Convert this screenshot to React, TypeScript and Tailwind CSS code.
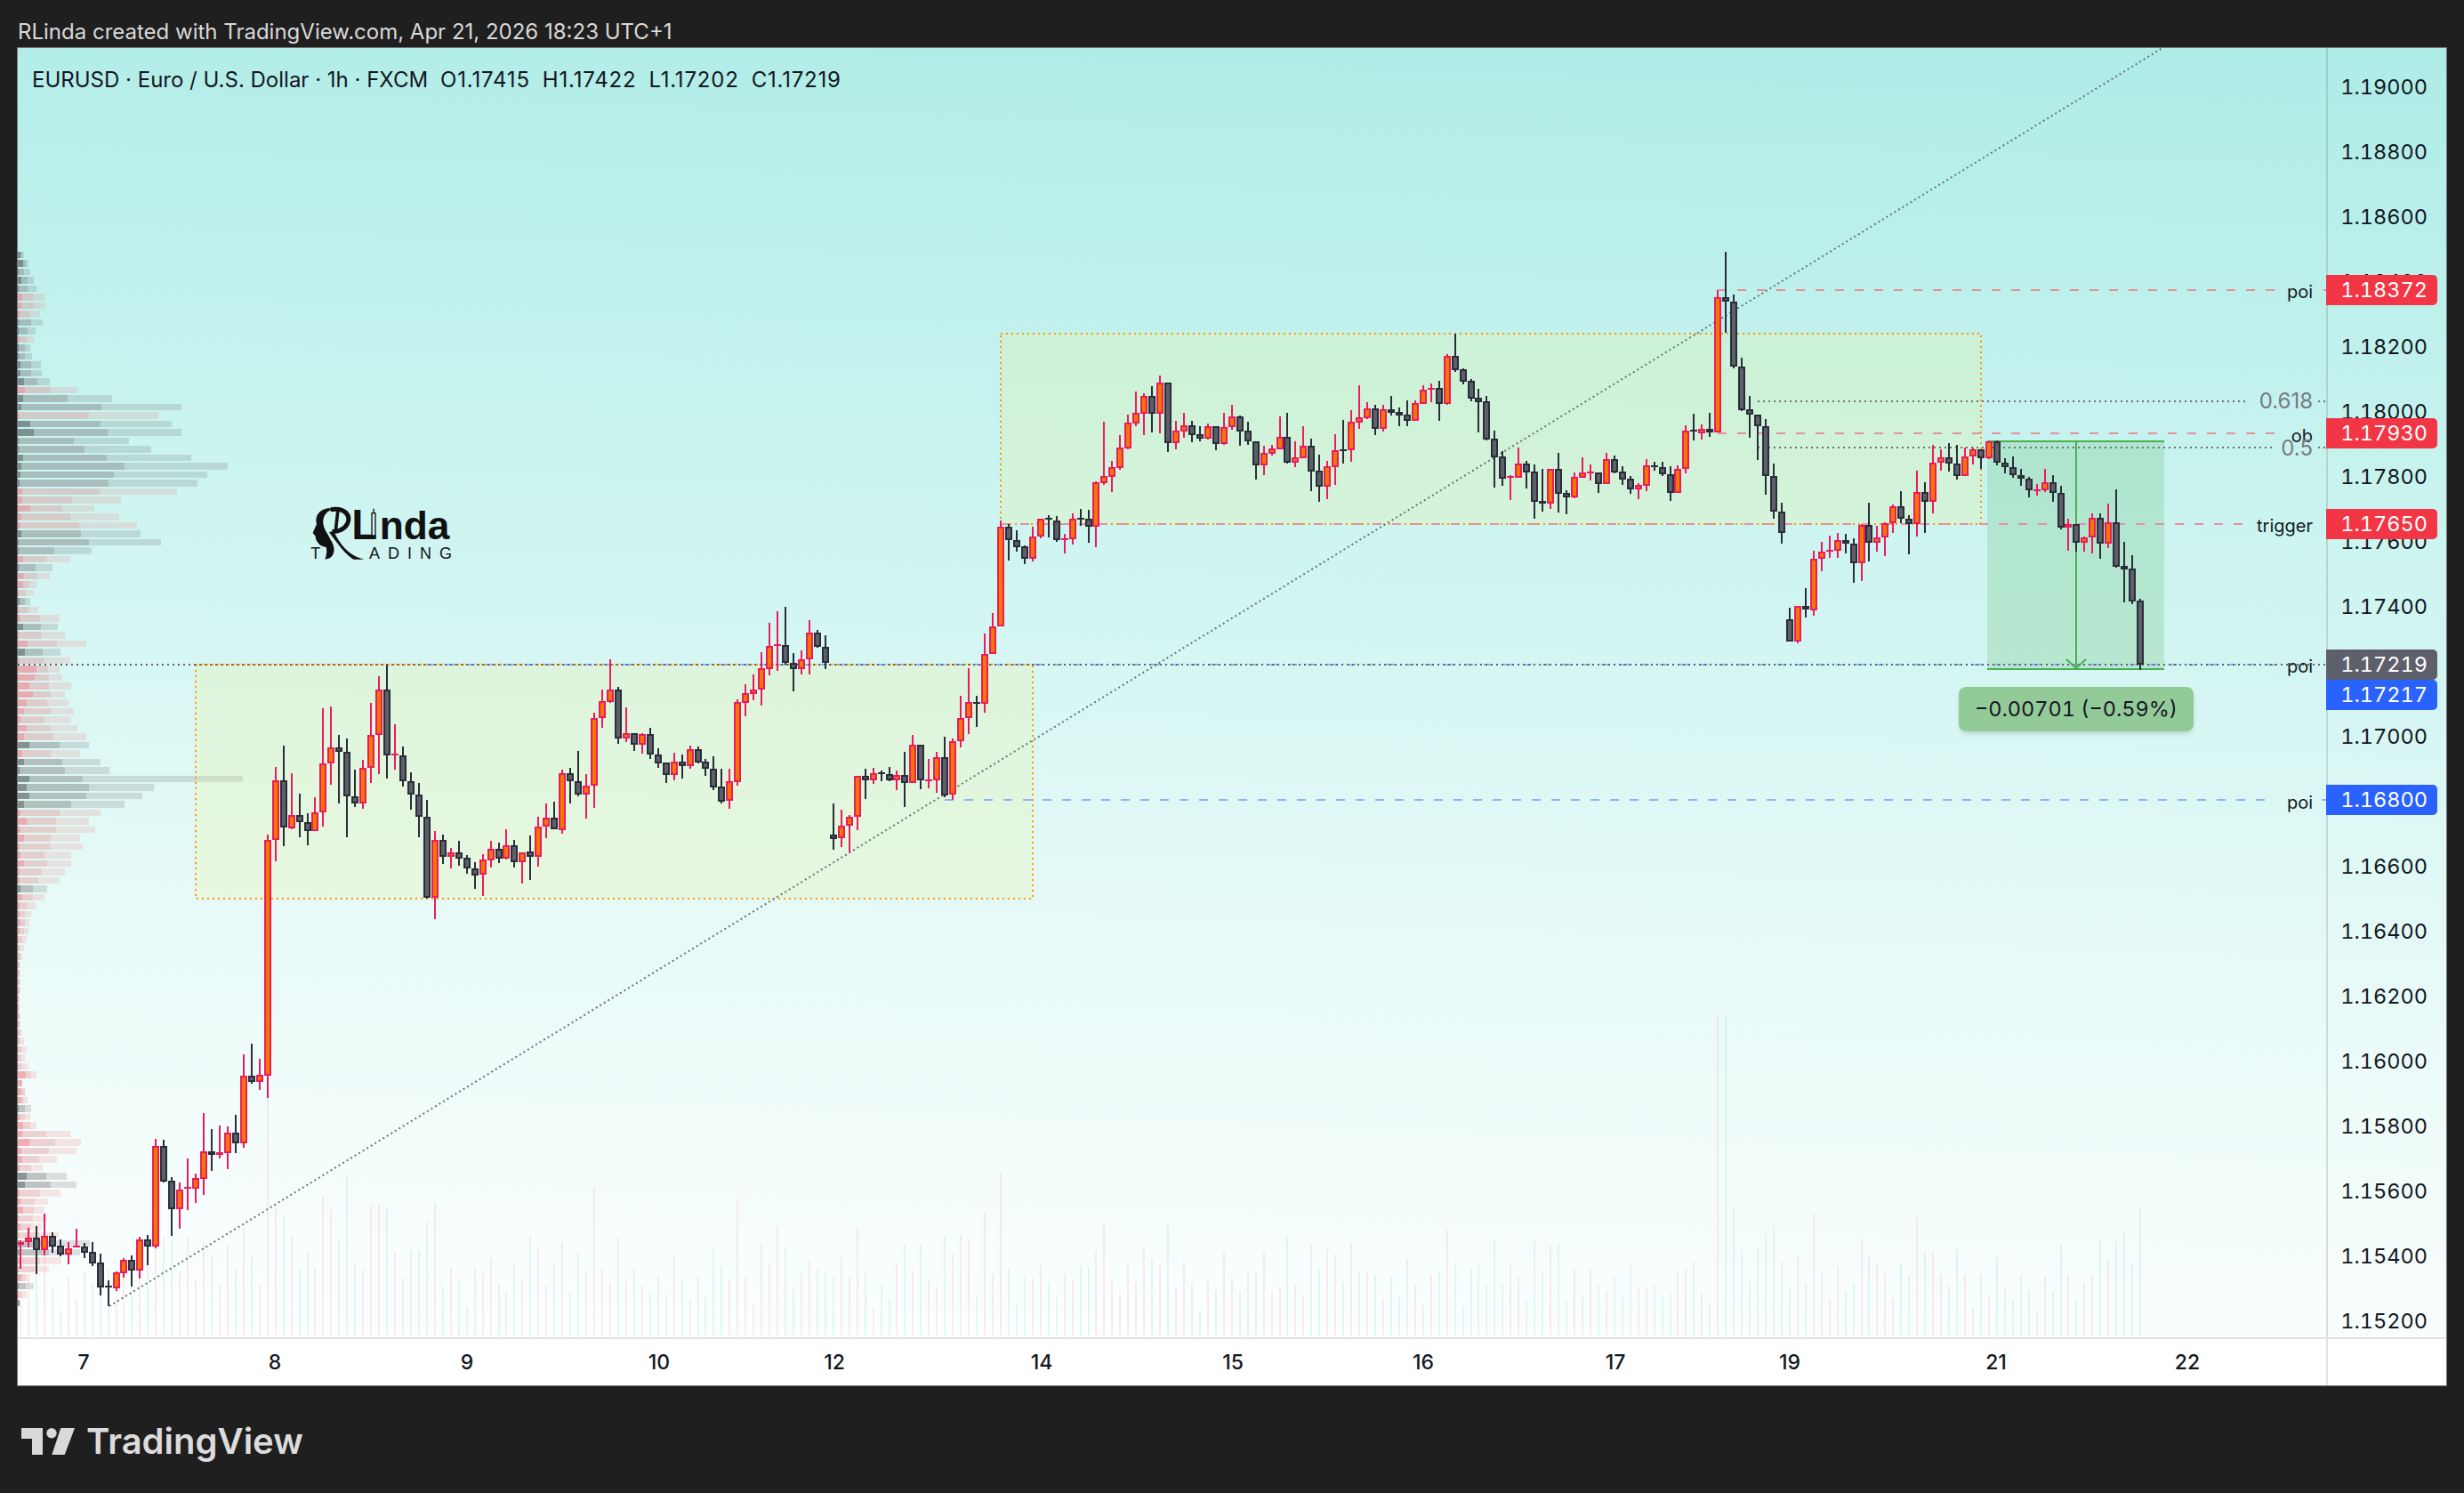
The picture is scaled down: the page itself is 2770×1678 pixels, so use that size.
import React from "react";

// candle rows: [up, wickTop, wickBottom, bodyTop, bodyBottom], y read off crops of the chart
type Row = [number, number, number, number, number];
const groups: { base: number; scale: number; rows: Row[] }[] = [
  { base: 1200, scale: 3, rows: [
    [1,582,678,587,598],[1,540,606,573,588],[0,534,696,573,615],[1,492,633,567,615],[0,555,624,567,603],[0,579,636,600,630],[1,588,663,609,630],
    [1,543,606,600,606],[0,591,642,603,624],[0,588,669,621,660],[0,627,768,657,741],[0,717,804,735,741],[1,687,753,690,744],[1,642,708,648,693],
    [0,633,738,648,684],[1,570,711,579,684],[0,564,666,579,603],[1,240,609,264,603],[0,243,387,264,384],[0,369,567,381,477],[1,387,543,411,477],
    [1,306,480,402,408],[1,357,456,372,408],[1,153,429,282,375],[0,207,348,282,294],[1,195,306,285,294],[1,198,342,219,288],[0,159,288,219,255],
  ] },
  { base: 0, scale: 1, rows: [
    [1,1185,1290,1209,1285],[0,1173,1218,1209,1216],[1,1190,1225,1208,1216],[1,938,1234,944,1209],
  ] },
  { base: 680, scale: 2.904, rows: [
    [1,529,836,573,768],[0,460,786,573,727],[1,550,732,686,728],[0,617,757,686,708],[0,680,783,708,739],[1,628,739,678,739],[1,338,722,518,677],
    [1,332,588,466,518],[0,425,649,466,478],[0,437,757,478,625],[0,538,658,625,647],[1,506,664,532,647],[1,320,580,425,532],[1,233,551,277,425],
    [0,195,565,277,490],[1,390,536,486,490],[0,463,591,490,574],[0,547,667,574,620],[0,582,757,620,692],[0,637,958,692,954],[1,739,1024,768,954],
    [0,750,844,768,823],[1,794,861,808,823],[0,770,850,808,827],[0,817,876,826,861],[0,840,925,860,882],[1,814,949,831,881],[1,770,858,795,832],
    [0,776,841,795,827],[1,733,830,783,827],[0,768,856,783,840],[1,806,908,806,840],[0,753,896,805,821],[1,692,853,724,821],[1,649,760,695,724],
    [0,643,733,695,733],[1,538,745,550,734],[0,532,647,550,574],[0,477,623,574,620],[1,553,696,590,620],[1,352,661,370,590],[1,277,400,315,370],
    [1,178,318,277,316],[0,268,452,277,437],[1,335,446,419,437],[0,419,475,419,455],[1,419,484,422,455],[0,402,501,422,489],[0,468,530,489,516],
    [0,515,580,515,556],[1,483,571,510,556],[0,489,565,510,525],
  ] },
  { base: 560, scale: 3, rows: [
    [1,835,911,847,902],[0,838,895,847,890],[0,880,935,889,913],[0,871,983,913,974],[0,912,1028,973,1022],[1,912,1046,955,1021],[1,679,968,688,956],
    [1,628,735,658,689],[1,595,680,646,659],[1,520,698,574,646],[1,421,596,499,575],[1,382,581,493,497],[0,367,560,496,556],[0,523,650,556,577],
    [1,514,593,544,577],[1,412,593,454,544],[0,445,503,454,502],[0,463,575,502,554],[0,1030,1184,1135,1148],[1,1051,1175,1105,1147],[1,1069,1193,1075,1105],
    [1,937,1118,937,1075],[0,913,1013,937,952],[1,910,962,928,952],[0,919,953,925,928],[0,907,953,931,952],[1,919,983,934,952],[0,856,1040,934,961],
    [1,799,961,832,961],[0,832,980,832,952],[1,880,977,949,952],[1,856,992,874,952],[0,805,1007,874,1001],[1,811,1016,820,1000],[1,667,839,742,820],
    [1,574,794,688,742],[0,667,770,688,694],[1,457,722,526,694],[1,388,526,433,526],[1,76,433,97,433],[0,88,209,97,142],[0,109,179,142,164],
    [0,160,221,163,205],[1,97,212,130,205],[1,70,134,70,130],[0,58,131,67,71],[0,61,146,76,142],[1,121,185,136,140],[1,52,155,70,139],[0,37,92,67,71],
    [0,40,149,70,97],
  ] },
  { base: 360, scale: 3, rows: [
    [1,544,765,547,697],[1,343,555,526,548],[1,475,579,496,527],[1,388,504,430,497],[1,319,435,346,431],[1,241,357,313,347],[1,247,387,256,314],
    [0,223,378,256,314],[1,187,381,211,314],[0,211,444,211,413],[1,340,435,373,413],[1,313,396,355,374],[0,340,411,355,386],[0,358,408,385,398],
    [1,349,402,358,398],[0,358,438,358,418],[1,313,419,361,418],[1,286,369,325,361],[0,322,423,325,374],[0,343,420,373,409],[0,409,537,409,488],
    [1,424,522,448,488],[1,421,456,433,449],[1,325,434,394,434],[0,313,483,394,479],[1,409,495,463,479],[1,358,464,424,464],[0,400,576,424,509],
    [0,454,612,508,560],[1,475,603,493,560],[1,385,555,439,494],[0,337,483,436,440],[1,304,477,343,439],
  ] },
  { base: 360, scale: 3, rows: [
    [1,220,366,328,344],[1,277,333,298,329],[0,286,387,298,365],[1,286,375,301,365],[0,256,321,301,311],[0,295,357,310,320],[0,271,357,319,338],
    [1,271,338,280,338],[1,220,281,235,281],[1,214,276,229,235],[0,205,339,229,281],[1,115,285,121,281],[0,46,174,121,167],[0,163,216,166,206],
    [0,199,273,205,263],[0,232,378,262,275],[0,256,405,274,401],[0,373,564,400,461],[0,442,558,460,533],[1,523,606,526,530],[1,430,531,484,530],
    [0,475,567,484,512],[0,487,669,511,611],[0,502,645,610,617],[1,502,636,502,617],[0,448,648,502,584],[0,574,654,583,596],[1,514,600,529,596],
    [1,463,531,514,530],[1,487,540,511,515],[0,514,582,514,551],[1,448,552,469,551],[0,457,516,469,513],[0,493,555,511,536],[0,526,585,535,570],
    [1,550,603,556,569],[1,469,576,490,557],[0,478,507,490,496],[0,478,525,496,520],[0,493,609,520,581],[1,490,581,502,581],[1,355,516,373,502],
    [0,316,405,370,374],[1,352,402,367,380],
  ] },
  { base: 300, scale: 3, rows: [
    [0,493,573,547,559],[1,79,559,103,559],[0,-51,222,103,118],[0,94,342,118,337],[0,307,486,337,482],[0,436,576,481,499],[0,499,651,499,538],
    [0,514,768,538,706],[0,664,849,706,826],[0,796,933,826,898],[0,1150,1262,1189,1262],[1,1144,1268,1144,1262],[0,1084,1182,1144,1156],[1,958,1176,985,1157],
    [1,928,1026,961,985],[1,907,981,955,958],[1,898,981,922,958],[0,901,966,922,934],[0,916,1065,934,1000],[1,867,1059,871,1000],[0,796,993,871,931],
    [1,874,960,913,931],[1,862,975,865,913],[1,802,897,808,865],[0,757,864,808,850],[0,838,969,850,868],[1,688,909,760,868],[0,727,897,760,793],
    [1,601,831,661,793],[1,616,687,643,661],[0,595,690,643,664],[0,601,717,664,706],[1,610,706,640,706],[1,610,666,616,640],[0,616,681,616,646],
    [1,589,648,589,646],[0,586,669,589,661],[0,646,696,661,676],[0,640,712,676,703],[0,682,738,703,715],[0,709,777,715,754],[1,733,771,751,754],
    [1,682,759,727,754],[0,703,792,727,763],[0,739,885,763,880],[1,850,957,868,880],[0,868,960,868,931],[1,910,960,913,931],[1,832,966,847,913],
    [0,832,984,847,934],[1,799,948,862,934],[0,751,1014,862,1010],[0,928,1131,1009,1019],[0,973,1137,1018,1127],
  ] },
  { base: 0, scale: 1, rows: [[0,673,753,675,747]] },
];

const candles = groups.flatMap((g) =>
  g.rows.map(([up, wt, wb, bt, bb]) => ({
    up: up === 1,
    wt: Math.round(g.base + wt / g.scale),
    wb: Math.round(g.base + wb / g.scale),
    bt: Math.round(g.base + bt / g.scale),
    bb: Math.round(g.base + bb / g.scale),
  }))
).map((c, i) => ({ ...c, x: Math.round(23 + 8.959 * i) }));

// volume profile rows: [type, dark end, mid end, light end], x * 3 like the crops
const profile: [string, number, number, number][] = [
  ["t",70,76,81],["t",78,87,96],["t",62,81,102],["t",72,93,114],["t",62,93,123],["p",75,111,150],["p",72,114,153],["p",66,99,135],["t",62,105,144],["t",62,93,120],
  ["p",66,90,114],["t",62,84,102],["t",62,84,108],["t",69,105,138],["t",69,105,141],["t",81,126,168],["p",84,171,261],["t",78,228,378],["t",72,342,612],["p",62,300,534],
  ["t",102,339,579],["t",114,363,612],["t",62,249,435],["t",62,285,510],["t",78,360,645],["t",72,420,768],["t",69,384,699],["t",66,366,666],["p",75,336,597],["p",75,243,408],
  ["p",102,210,318],["p",72,237,402],["p",69,267,462],["t",72,273,474],["t",62,300,543],["t",62,183,309],["p",78,156,237],["t",62,120,177],["p",81,126,168],["p",78,99,123],
  ["p",62,87,114],["t",66,84,102],["p",62,96,129],["p",69,135,201],["t",78,138,195],["p",62,141,219],["p",93,192,291],["t",84,144,204],["p",62,150,237],["p",123,162,201],
  ["p",117,165,210],["p",100,165,240],["p",110,170,220],["p",90,160,230],["p",80,170,250],["p",70,150,240],["p",90,170,260],["p",80,180,290],["t",100,200,300],["p",75,170,270],
  ["t",80,210,340],["t",66,220,370],["t",100,280,820],["t",90,300,520],["t",100,290,480],["t",80,240,420],["p",70,200,340],["p",90,190,300],["p",70,190,320],["p",80,170,270],
  ["p",66,170,280],["p",70,150,240],["p",80,160,240],["p",66,140,220],["p",66,130,200],["t",70,110,160],["p",75,110,150],["p",66,90,120],["p",66,85,105],["p",70,85,100],
  ["p",66,80,95],["p",62,75,90],["p",62,70,80],["p",62,68,74],["p",62,66,70],["p",62,65,68],["p",62,65,68],["p",62,65,68],["p",62,64,66],["p",62,64,66],
  ["p",62,65,68],["p",62,66,70],["p",62,68,74],["p",62,70,80],["p",62,75,90],["p",62,72,84],["p",62,75,95],
  ["p",87,105,123],["p",75,75,75],["p",72,84,84],["p",72,81,93],["t",62,84,105],["p",66,84,102],["p",78,102,123],["p",75,156,237],["p",99,186,273],["p",72,165,258],
  ["p",75,132,192],["p",66,105,144],["t",90,156,225],["t",84,171,258],["p",66,135,204],["p",69,117,162],["p",78,114,150],["p",62,111,159],["p",69,105,141],["p",62,132,198],
  ["t",62,183,303],["t",62,165,270],["p",62,135,207],["p",62,117,165],["p",72,87,102],["t",62,87,114],["p",62,75,90],["t",66,66,66],
];

const shades: Record<string, string[]> = {
  t: ["rgba(70,80,80,.6)", "rgba(120,120,120,.44)", "rgba(120,120,120,.22)"],
  p: ["rgba(240,130,140,.65)", "rgba(225,120,125,.33)", "rgba(240,120,120,.18)"],
};

const priceTicks = ["1.19000","1.18800","1.18600","1.18400","1.18200","1.18000","1.17800","1.17600","1.17400","1.17200","1.17000","1.16800","1.16600","1.16400","1.16200","1.16000","1.15800","1.15600","1.15400","1.15200"];

const days = [
  { label: "7", cls: "ml-[74px]" }, { label: "8", cls: "ml-[215px]" }, { label: "9", cls: "ml-[216px]" }, { label: "10", cls: "ml-[216px]" },
  { label: "12", cls: "ml-[197px]" }, { label: "14", cls: "ml-[233px]" }, { label: "15", cls: "ml-[215px]" }, { label: "16", cls: "ml-[214px]" },
  { label: "17", cls: "ml-[216px]" }, { label: "19", cls: "ml-[196px]" }, { label: "21", cls: "ml-[232px]" }, { label: "22", cls: "ml-[215px]" },
];

const tags = [
  { text: "1.18372", cls: "top-[255px] bg-[#f23645]" },
  { text: "1.17930", cls: "top-[416px] bg-[#f23645]" },
  { text: "1.17650", cls: "top-[518px] bg-[#f23645]" },
  { text: "1.17219", cls: "top-[676px] bg-[#5d606b]" },
  { text: "1.17217", cls: "top-[710px] bg-[#2962ff]" },
  { text: "1.16800", cls: "top-[828px] bg-[#2962ff]" },
];

const lineLabels = [
  { text: "poi", cls: "top-[260px] text-[#131722] text-[20px]" },
  { text: "0.618", cls: "top-[383px] text-[#787b86] text-[24px]" },
  { text: "ob", cls: "top-[422px] text-[#131722] text-[20px]" },
  { text: "0.5", cls: "top-[436px] text-[#787b86] text-[24px]" },
  { text: "trigger", cls: "top-[523px] text-[#131722] text-[20px]" },
  { text: "poi", cls: "top-[681px] text-[#131722] text-[20px]" },
  { text: "poi", cls: "top-[834px] text-[#131722] text-[20px]" },
];

function Chart() {
  const volume = (c: (typeof candles)[number], i: number) => {
    const noise = ((i * 37) % 23) * 2.4 - 26;
    const h = i === 213 || i === 214 ? 360 : Math.max(26, Math.min(280, 30 + (c.wb - c.wt) * 1.1 + noise));
    return <rect key={i} x={c.x - 1} y={1501 - h} width={2} height={h} fill={c.up ? "rgba(242,54,69,.1)" : "rgba(0,150,136,.09)"} />;
  };

  return (
    <svg viewBox="20 54 2595 1449" className="absolute inset-0 w-[2595px] h-[1449px]" shapeRendering="crispEdges">
      {candles.map(volume)}

      {profile.map(([t, a, b, c], i) => {
        const y = 282.7 + 9.5 * i;
        const s = shades[t];
        return (
          <g key={i}>
            <rect x={20} y={y} width={a / 3 - 20} height={7.5} fill={s[0]} />
            <rect x={a / 3} y={y} width={(b - a) / 3} height={7.5} fill={s[1]} />
            <rect x={b / 3} y={y} width={(c - b) / 3} height={7.5} fill={s[2]} />
          </g>
        );
      })}

      {/* yellow boxes */}
      <rect x={220} y={747} width={941} height={263} fill="rgba(240,240,140,.22)" stroke="#ff9800" strokeWidth={2} strokeDasharray="2 4" />
      <rect x={1125} y={375} width={1102} height={214} fill="rgba(240,240,140,.22)" stroke="#ff9800" strokeWidth={2} strokeDasharray="2 4" />

      {/* measure range */}
      <rect x={2234} y={496} width={199} height={256} fill="rgba(76,175,80,.2)" />

      <line x1={123} y1={1468} x2={2431} y2={54} stroke="#66757a" strokeWidth={2} strokeDasharray="2 3.3" shapeRendering="auto" />

      {/* horizontal levels */}
      <g strokeWidth={2}>
        <path d="M1931 326H2558M2612 326H2615" stroke="#e6919d" strokeDasharray="10 12" />
        <path d="M1931 487H2558" stroke="#e6919d" strokeDasharray="10 12" />
        <path d="M1125 589H2522" stroke="#e6919d" strokeDasharray="10 12" />
        <path d="M480 747H2558" stroke="#8eb2f9" strokeDasharray="10 12" />
        <path d="M1062 899H2558M2610 899H2615" stroke="#8eb2f9" strokeDasharray="10 12" />
        <path d="M20 747H2615" stroke="#5d606b" strokeDasharray="2 4" />
        <path d="M1976 451H2524M2606 451H2615" stroke="#6b7070" strokeDasharray="2 4" />
        <path d="M1976 503H2554M2606 503H2615" stroke="#6b7070" strokeDasharray="2 4" />
      </g>

      <g stroke="#4caf50" strokeWidth={2} fill="none">
        <path d="M2234 496H2433M2234 752H2433M2334 496V752" />
        <path d="M2323 741L2334 751L2345 741" shapeRendering="auto" />
      </g>

      {candles.map((c, i) => {
        const edge = c.up ? "#ea1c60" : "#2a2e39";
        const fill = c.up ? "#f57600" : "#5d606b";
        const h = Math.max(c.bb - c.bt, 2);
        return (
          <g key={i}>
            <rect x={c.x - 1} y={c.wt} width={2} height={c.wb - c.wt} fill={edge} />
            <rect x={c.x - 4} y={c.bt} width={8} height={h} fill={edge} />
            {h > 4 && <rect x={c.x - 2} y={c.bt + 2} width={4} height={h - 4} fill={fill} />}
          </g>
        );
      })}

      {/* RLinda watermark */}
      <g transform="translate(320 540) scale(0.3333)" fill="#111" shapeRendering="auto">
        <path d="M150 93C118 97 100 118 108 148C102 160 98 170 95 178C100 184 104 186 104 190C104 200 110 206 114 212C122 222 132 222 140 225C144 240 140 255 136 266L152 262C170 250 172 225 155 200C146 180 132 165 130 145C128 122 140 104 160 98Z" />
        <path d="M155 98C205 90 224 120 212 145C202 165 180 174 160 172" fill="none" stroke="#111" strokeWidth={15} />
        <path d="M180 97L172 170" fill="none" stroke="#111" strokeWidth={11} />
        <path d="M165 170C180 200 205 250 268 266L232 266C205 250 180 215 150 175Z" />
        <text x={226} y={198} fontFamily="Liberation Sans" fontWeight={700} fontSize={142}>L</text>
        <path d="M300 95V190" stroke="#111" strokeWidth={4} />
        <rect x={294} y={110} width={12} height={76} fill="#cdf4f0" stroke="#111" strokeWidth={4} />
        <text x={320} y={198} fontFamily="Liberation Sans" fontWeight={700} fontSize={133}>nda</text>
        <text x={88} y={263} fontFamily="Liberation Sans" fontSize={54}>T</text>
        <text x={285} y={263} fontFamily="Liberation Sans" fontSize={54} letterSpacing={27}>ADING</text>
      </g>
    </svg>
  );
}

export default function App() {
  return (
    <div className="w-[2770px] h-[1678px] bg-[#1f1f1f] flex flex-col font-[family-name:Inter,sans-serif] overflow-hidden">
      <div className="h-[54px] pl-[20px] pt-[20px] text-[24px] leading-[32px] text-[#d9d9d9] whitespace-nowrap">
        RLinda created with TradingView.com, Apr 21, 2026 18:23 UTC+1
      </div>

      <div className="ml-[20px] w-[2730px] h-[1503px] flex flex-col ring-1 ring-[#777]">
        <div className="h-[1449px] flex bg-[linear-gradient(182deg,#aeece7_0%,#cbf4f0_35%,#ecfbf9_75%,#fdffff_100%)]">
          <div className="relative w-[2595px] h-full">
            <Chart />
            <div className="absolute left-[16px] top-[20px] flex gap-[14px] text-[24px] leading-[32px] text-[#131722] whitespace-nowrap">
              <span>EURUSD · Euro / U.S. Dollar · 1h · FXCM</span>
              <span className="tracking-[0.8px]">O1.17415</span>
              <span className="tracking-[0.8px]">H1.17422</span>
              <span className="tracking-[0.8px]">L1.17202</span>
              <span className="tracking-[0.8px]">C1.17219</span>
            </div>
            {lineLabels.map((l, i) => (
              <span key={i} className={`absolute right-[15px] leading-[28px] ${l.cls}`}>{l.text}</span>
            ))}
            <div className="absolute left-[2182px] top-[718px] w-[264px] h-[50px] rounded-[8px] bg-[#93cb98] shadow-md flex items-center justify-center text-[23.5px] text-[#131722] tabular-nums">
              −0.00701 (−0.59%)
            </div>
          </div>

          <div className="relative w-[135px] h-full border-l-2 border-[#0000001f] pt-[7px]">
            {priceTicks.map((p) => (
              <div key={p} className="h-[73px] flex items-center justify-end pr-[21px] text-[23.5px] text-[#131722] tabular-nums">{p}</div>
            ))}
            {tags.map((t) => (
              <div key={t.text} className={`absolute left-[-2px] w-[125px] h-[34px] rounded-r-[5px] flex items-center justify-end pr-[11px] text-[23.5px] text-white tabular-nums ${t.cls}`}>{t.text}</div>
            ))}
          </div>
        </div>

        <div className="h-[54px] flex bg-white border-t-2 border-[#e0e3eb]">
          <div className="w-[2595px] flex items-center text-[23px] font-medium text-[#131722]">
            {days.map((d) => (
              <span key={d.label} className={`w-0 flex justify-center ${d.cls}`}>{d.label}</span>
            ))}
          </div>
          <div className="w-[135px] border-l-2 border-[#e0e3eb]" />
        </div>
      </div>

      <div className="flex items-center pl-[24px] pt-[43px] gap-[13px] text-[#dcdcdc]">
        <svg viewBox="0 0 60 30" className="w-[60px] h-[30px]" fill="#d9d9d9">
          <path d="M0 0H24V30H12V12H0Z" />
          <circle cx="34" cy="5.7" r="5.7" />
          <path d="M44.3 0H60L48.7 30H34.3Z" />
        </svg>
        <span className="text-[40px] leading-[40px] font-semibold">TradingView</span>
      </div>
    </div>
  );
}
